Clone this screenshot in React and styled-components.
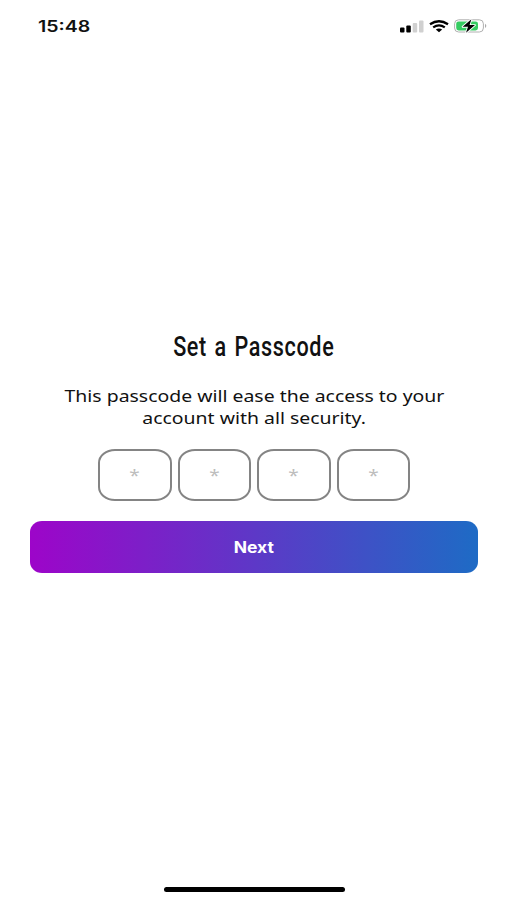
import React from "react";
import styled, { createGlobalStyle } from "styled-components";

const GlobalStyle = createGlobalStyle`
  * { box-sizing: border-box; }
  body { margin: 0; background: #fff; }
`;

const Screen = styled.div`
  width: 507px;
  height: 900px;
  display: flex;
  flex-direction: column;
  align-items: center;
  background: #fff;
  color: #111;
  font-family: "Noto Sans", sans-serif;
  overflow: hidden;
`;

const StatusBar = styled.header`
  width: 100%;
  height: 52px;
  padding: 0 19px 0 38px;
  display: flex;
  align-items: center;
  justify-content: space-between;
`;

const Stretch = styled.span`
  display: inline-block;
  white-space: nowrap;
  transform: scaleX(${(p) => p.$x});
  transform-origin: ${(p) => p.$origin || "center"};
`;

const Time = styled.div`
  padding-top: 1px;
  font: 600 15.5px/20px Inter, sans-serif;
`;

const StatusIcons = styled.div`
  display: flex;
  align-items: center;
  gap: 5px;
`;

const Main = styled.main`
  flex: 1;
  width: 100%;
  padding: 277px 29px 0 30px;
  display: flex;
  flex-direction: column;
  align-items: center;
`;

const Title = styled.h1`
  margin: 0;
  font: 500 27px/36px Roboto, sans-serif;
  letter-spacing: 0.8px;
  word-spacing: 2px;
`;

const Description = styled.p`
  margin: 21px 0 0;
  display: flex;
  flex-direction: column;
  align-items: center;
  font-size: 16px;
  line-height: 21.5px;
`;

const CodeRow = styled.div`
  display: flex;
  gap: 6px;
  margin-top: 19.5px;
`;

const Digit = styled.div`
  width: 73.5px;
  height: 52.5px;
  border: 2px solid #848484;
  border-radius: 17px / 14px;
  display: flex;
  justify-content: center;
  color: #bdbdbd;
  font-size: 16.5px;
  line-height: 48px;
`;

const NextButton = styled.button`
  width: 448px;
  height: 52.5px;
  margin-top: 19.5px;
  padding: 1px 0 0;
  border: 0;
  border-radius: 12px / 11px;
  background: linear-gradient(90deg, #9d05c9, #1e6bc5);
  color: #fff;
  font: 700 15.5px/52px Inter, sans-serif;
`;

const HomeIndicator = styled.div`
  width: 181px;
  height: 5px;
  margin: 0 0 8px 1px;
  border-radius: 3px;
  background: #000;
`;

const Signal = () => (
  <svg width="24" height="13" viewBox="0 0 24 13">
    <rect x="0" y="7.5" width="4.5" height="5" rx="1" fill="#000" />
    <rect x="6.3" y="5.5" width="4.5" height="7" rx="1" fill="#000" />
    <rect x="12.7" y="3" width="4.5" height="9.5" rx="1" fill="#d0d0d0" />
    <rect x="19" y="0.5" width="4.5" height="12" rx="1" fill="#d0d0d0" />
  </svg>
);

const Wifi = () => (
  <svg width="20" height="13" viewBox="0 0 20 13" fill="none" stroke="#000" strokeWidth="2.3">
    <path d="M1 4.2Q10-1.7 19 4.2" />
    <path d="M4.2 7.4Q10 3.5 15.8 7.4" />
    <path d="M6.8 9.4Q10 7.5 13.2 9.4L10 12.3Z" fill="#000" stroke="none" />
  </svg>
);

const Battery = () => (
  <svg width="34" height="16" viewBox="0 0 34 16">
    <rect x="0.6" y="1.8" width="28.8" height="12.2" rx="4" fill="#fff" stroke="#b0b0b0" />
    <rect x="2.2" y="3.4" width="21.8" height="9" rx="2.4" fill="#36cc62" />
    <path d="M31 5.8Q33.6 7.9 31 10Z" fill="#aaa" />
    <path d="M17.4 1.2 8.6 8.8H14L12 14.8 21 7.1H15.6Z" fill="#000" stroke="#fff" strokeWidth="1.8" paintOrder="stroke" strokeLinejoin="round" />
  </svg>
);

const slots = [0, 1, 2, 3];

export default function App() {
  return (
    <Screen>
      <GlobalStyle />
      <StatusBar>
        <Time><Stretch $x={1.26} $origin="left">15:48</Stretch></Time>
        <StatusIcons><Signal /><Wifi /><Battery /></StatusIcons>
      </StatusBar>
      <Main>
        <Title><Stretch $x={0.8}>Set a Passcode</Stretch></Title>
        <Description>
          <Stretch $x={1.214}>This passcode will ease the access to your</Stretch>
          <Stretch $x={1.214}>account with all security.</Stretch>
        </Description>
        <CodeRow>
          {slots.map((slot) => (
            <Digit key={slot}><Stretch $x={1.15}>*</Stretch></Digit>
          ))}
        </CodeRow>
        <NextButton><Stretch $x={1.13}>Next</Stretch></NextButton>
      </Main>
      <HomeIndicator />
    </Screen>
  );
}
